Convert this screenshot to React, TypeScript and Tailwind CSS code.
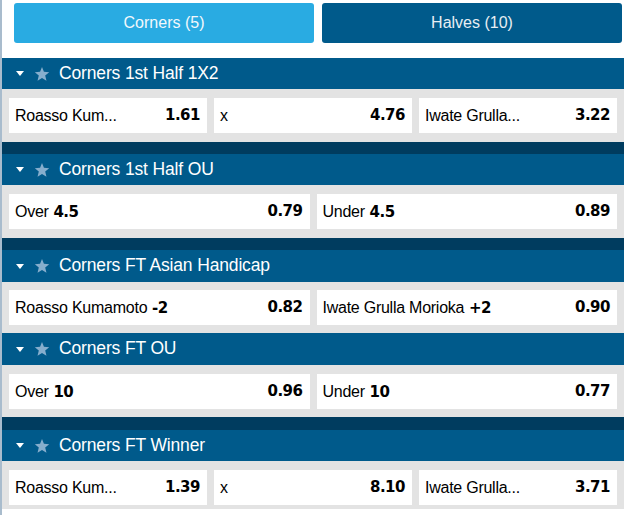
import React from "react";

const sans = { fontFamily: '"Liberation Sans", Arial, sans-serif' };
const bold = { fontFamily: '"DejaVu Sans", Verdana, sans-serif' };

type Cell = { label: string; extra?: string; odds: string };

function Caret() {
  return (
    <svg width="8" height="5" viewBox="0 0 8 5" className="shrink-0">
      <path d="M0 0 H8 L4 5 Z" fill="#ffffff" />
    </svg>
  );
}

function Star() {
  return (
    <svg width="16" height="16" viewBox="0 0 24 24" className="shrink-0">
      <path
        d="M12 1.5 L14.9 8.7 L22.8 9.3 L16.8 14.4 L18.7 22.2 L12 18 L5.3 22.2 L7.2 14.4 L1.2 9.3 L9.1 8.7 Z"
        fill="#86aecd"
      />
    </svg>
  );
}

function Header({ title, h }: { title: string; h: string }) {
  return (
    <div className={`${h} bg-[#005a8b] flex items-center pl-[14px]`}>
      <Caret />
      <div className="ml-[10px]">
        <Star />
      </div>
      <span
        className="ml-[9px] text-[17.5px] tracking-[-0.15px] text-white leading-none"
        style={sans}
      >
        {title}
      </span>
    </div>
  );
}

function OddsCell({ c }: { c: Cell }) {
  return (
    <div className="h-[35px] bg-white flex items-center justify-between pl-[6px] pr-[7px] min-w-0">
      <span className="text-[16px] tracking-[-0.25px] text-black whitespace-nowrap" style={sans}>
        {c.label}
        {c.extra && (
          <span className="text-[15px] tracking-[-0.5px] font-bold" style={bold}>
            {" "}
            {c.extra}
          </span>
        )}
      </span>
      <span className="text-[15px] tracking-[-0.5px] font-bold text-black" style={bold}>
        {c.odds}
      </span>
    </div>
  );
}

function Body({ cells, pt, pb }: { cells: Cell[]; pt: string; pb: string }) {
  const cols = cells.length === 3 ? "grid-cols-3" : "grid-cols-2";
  return (
    <div className={`bg-[#e3e3e3] px-[7px] ${pt} ${pb} grid ${cols} gap-[7px]`}>
      {cells.map((c, i) => (
        <OddsCell key={i} c={c} />
      ))}
    </div>
  );
}

export default function App() {
  return (
    <div className="w-[627px] h-[515px] bg-white flex overflow-hidden">
      <div className="w-[2px] bg-[#a9bccd] shrink-0" />
      <div className="w-[622px] flex flex-col">
        <div className="flex gap-[8px] pl-[12px] pt-[3px] h-[58px]">
          <div
            className="w-[300px] h-[40px] rounded-[3px] bg-[#29abe2] flex items-center justify-center text-[16px] text-[#f2f8fc]"
            style={sans}
          >
            Corners (5)
          </div>
          <div
            className="w-[300px] h-[40px] rounded-[3px] bg-[#005a8b] flex items-center justify-center text-[16px] text-[#e8eef3]"
            style={sans}
          >
            Halves (10)
          </div>
        </div>

        <Header title="Corners 1st Half 1X2" h="h-[31px]" />
        <Body
          pt="pt-[9px]"
          pb="pb-[9px]"
          cells={[
            { label: "Roasso Kum...", odds: "1.61" },
            { label: "x", odds: "4.76" },
            { label: "Iwate Grulla...", odds: "3.22" },
          ]}
        />
        <div className="h-[12px] bg-[#003c5f]" />

        <Header title="Corners 1st Half OU" h="h-[31px]" />
        <Body
          pt="pt-[9px]"
          pb="pb-[9px]"
          cells={[
            { label: "Over", extra: "4.5", odds: "0.79" },
            { label: "Under", extra: "4.5", odds: "0.89" },
          ]}
        />
        <div className="h-[12px] bg-[#003c5f]" />

        <Header title="Corners FT Asian Handicap" h="h-[32px]" />
        <Body
          pt="pt-[8px]"
          pb="pb-[8px]"
          cells={[
            { label: "Roasso Kumamoto", extra: "-2", odds: "0.82" },
            { label: "Iwate Grulla Morioka", extra: "+2", odds: "0.90" },
          ]}
        />
        <Header title="Corners FT OU" h="h-[32px]" />
        <Body
          pt="pt-[9px]"
          pb="pb-[8px]"
          cells={[
            { label: "Over", extra: "10", odds: "0.96" },
            { label: "Under", extra: "10", odds: "0.77" },
          ]}
        />
        <div className="h-[13px] bg-[#003c5f]" />

        <Header title="Corners FT Winner" h="h-[31px]" />
        <Body
          pt="pt-[9px]"
          pb="pb-[4px]"
          cells={[
            { label: "Roasso Kum...", odds: "1.39" },
            { label: "x", odds: "8.10" },
            { label: "Iwate Grulla...", odds: "3.71" },
          ]}
        />
      </div>
    </div>
  );
}
